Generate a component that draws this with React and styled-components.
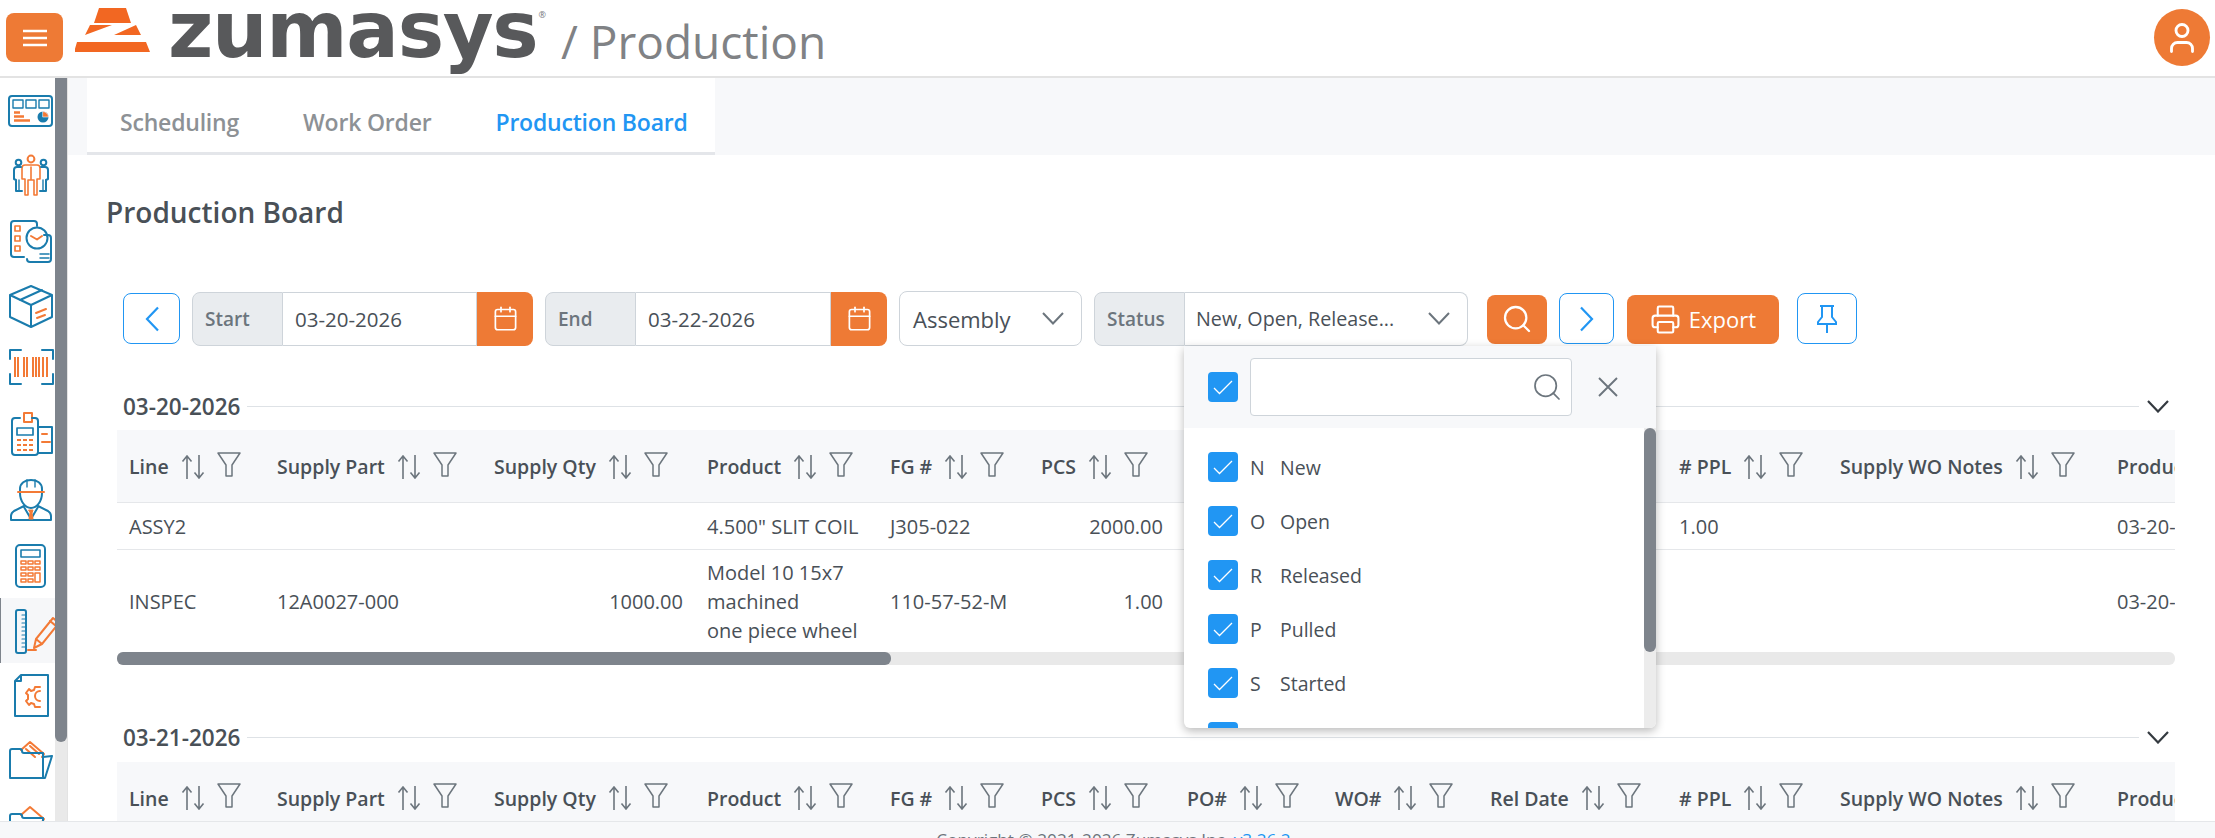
import styled, { createGlobalStyle } from "styled-components";
import { Calendar, Printer, Search, User } from "lucide-react";

const BLUE = "#1a7cad";
const ORANGE = "#f37a36";
const FONT = `"Open Sans", "Noto Sans", sans-serif`;

const GlobalStyle = createGlobalStyle`
  html, body {
    margin: 0;
    height: 100%;
    overflow: hidden;
    background: #fff;
  }
  body {
    font-family: ${FONT};
    color: #495057;
  }
  * {
    box-sizing: border-box;
  }
`;

const Page = styled.div`
  width: 2215px;
  height: 838px;
  display: flex;
  flex-direction: column;
  overflow: hidden;
`;

const Header = styled.header`
  flex: 0 0 78px;
  display: flex;
  align-items: flex-start;
  padding: 13px 5px 0 6px;
  border-bottom: 2px solid #e3e3e3;
  background: #fff;
  overflow: hidden;
`;

const MenuButton = styled.button`
  width: 57px;
  height: 49px;
  border: 0;
  border-radius: 8px;
  padding: 0;
  background: #ee7a35;
  display: flex;
  align-items: center;
  justify-content: center;
`;

const LogoLink = styled.div`
  display: flex;
  align-items: flex-start;
  margin: -13px 0 0 12px;
  height: 76px;
`;

const LogoMark = styled.svg`
  width: 82px;
  height: 60px;
  flex: none;
`;

const Wordmark = styled.span`
  font-family: "DejaVu Sans", sans-serif;
  font-weight: 700;
  font-size: 78px;
  line-height: 60px;
  letter-spacing: -1.3px;
  color: #58595b;
  margin-left: 11px;
`;

const Registered = styled.span`
  font-size: 9px;
  line-height: 12px;
  margin: 9px 0 0 1px;
  color: #77787b;
`;

const AppName = styled.span`
  font-size: 46px;
  line-height: 60px;
  margin: 11px 0 0 15px;
  color: #808285;
`;

const Avatar = styled.div`
  margin: -4px 0 0 auto;
  width: 56px;
  height: 57px;
  border-radius: 50%;
  background: #ee7a35;
  color: #fff;
  display: flex;
  align-items: center;
  justify-content: center;
`;

const Body = styled.div`
  flex: 0 0 743px;
  display: flex;
  overflow: hidden;
`;

const Sidebar = styled.nav`
  flex: 0 0 68px;
  height: 100%;
  display: flex;
  border-right: 1px solid #e3e3e3;
`;

const SideList = styled.div`
  flex: 0 0 55px;
  overflow: hidden;
`;

const SideItem = styled.div`
  height: 65px;
  padding-left: 6px;
  display: flex;
  align-items: center;
  overflow: hidden;
  background: ${(p) => (p.$active ? "#f6f7f9" : "transparent")};
  border-left: 1px solid ${(p) => (p.$active ? "#7e848c" : "transparent")};
`;

const SideIcon = styled.svg`
  width: 48px;
  height: 48px;
  flex: none;
  overflow: visible;
  fill: none;
  stroke-width: 2;
  stroke-linejoin: round;
  stroke-linecap: round;
`;

const VTrack = styled.div`
  flex: 0 0 12px;
  height: 100%;
  background: ${(p) => p.$bg};
  border-radius: ${(p) => p.$radius};
`;

const VThumb = styled.div`
  height: ${(p) => p.$h}px;
  background: #7e848c;
  border-radius: ${(p) => p.$radius};
`;

const HTrack = styled.div`
  height: 13px;
  background: #e9e9e9;
  border-radius: 6px;
`;

const HThumb = styled.div`
  width: ${(p) => p.$w}px;
  height: 13px;
  background: #7e848c;
  border-radius: 6px;
`;

const Main = styled.main`
  flex: 1;
  min-width: 0;
  overflow: hidden;
`;

const TabStrip = styled.div`
  height: 77px;
  padding-left: 19px;
  background: #f7f8fa;
`;

const Tabs = styled.div`
  width: 628px;
  height: 77px;
  padding: 0 0 0 33px;
  display: flex;
  align-items: center;
  gap: 64px;
  background: #fff;
  border-bottom: 3px solid #e4e6ea;
`;

const Tab = styled.span`
  font-size: 23px;
  font-weight: 600;
  margin-top: 14px;
  letter-spacing: -0.2px;
  color: ${(p) => (p.$active ? "#2196f3" : "#8d9195")};
`;

const Content = styled.div`
  padding: 39px 0 0 38px;
`;

const Title = styled.h2`
  margin: 0 0 61px;
  font-size: 28px;
  line-height: 36px;
  font-weight: 600;
  color: #495057;
`;

const Toolbar = styled.div`
  display: flex;
  align-items: center;
  gap: 12px;
  height: 55px;
  margin-left: 17px;
`;

const OutlineButton = styled.button`
  width: ${(p) => p.$w}px;
  height: 51px;
  margin-left: ${(p) => p.$ml || 0}px;
  padding: 0;
  border: 1px solid #2196f3;
  border-radius: 8px;
  background: #fff;
  display: flex;
  align-items: center;
  justify-content: center;
`;

const Group = styled.div`
  position: relative;
  width: ${(p) => p.$w}px;
  height: 54px;
  display: flex;
  border-radius: 8px;
  background: #fff;
`;

const GroupLabel = styled.span`
  width: ${(p) => p.$w}px;
  flex: none;
  padding-left: 12px;
  display: flex;
  align-items: center;
  font-size: 19px;
  font-weight: 600;
  color: #6c757d;
  background: #e9ecef;
  border: 1px solid #ced4da;
  border-radius: 8px 0 0 8px;
`;

const DateInput = styled.span`
  flex: 1;
  min-width: 0;
  padding-left: 12px;
  display: flex;
  align-items: center;
  font-size: 20.5px;
  color: #495057;
  border: 1px solid #ced4da;
  border-left: 0;
`;

const CalendarButton = styled.span`
  width: 56px;
  flex: none;
  display: flex;
  align-items: center;
  justify-content: center;
  background: #ee7a35;
  color: #fff;
  border-radius: 0 8px 8px 0;
`;

const SelectBox = styled.div`
  width: 183px;
  height: 55px;
  padding: 0 17px 0 13px;
  display: flex;
  align-items: center;
  justify-content: space-between;
  font-size: 22px;
  color: #495057;
  border: 1px solid #ced4da;
  border-radius: 8px;
`;

const StatusValue = styled.span`
  flex: 1;
  min-width: 0;
  padding: 0 17px 0 11px;
  display: flex;
  align-items: center;
  justify-content: space-between;
  font-size: 19.7px;
  white-space: nowrap;
  border: 1px solid #ced4da;
  border-left: 0;
  border-radius: 0 8px 8px 0;
`;

const OrangeButton = styled.button`
  width: ${(p) => p.$w}px;
  height: 49px;
  margin: 1px 0 0 ${(p) => p.$ml || 0}px;
  padding: 0;
  border: 0;
  border-radius: 8px;
  background: #ee7a35;
  color: #fff;
  font-family: ${FONT};
  font-size: 22px;
  display: flex;
  align-items: center;
  justify-content: center;
  gap: 8px;
`;

const Dropdown = styled.div`
  position: absolute;
  top: 54px;
  left: 90px;
  width: 472px;
  height: 382px;
  z-index: 5;
  background: #fff;
  border-radius: 0 0 6px 6px;
  box-shadow: 0 3px 10px rgba(0, 0, 0, 0.28);
  display: flex;
  flex-direction: column;
`;

const DropHead = styled.div`
  flex: 0 0 82px;
  padding: 12px 0 0 24px;
  display: flex;
  align-items: flex-start;
  background: #f7f8fa;
`;

const Check = styled.span`
  width: 30px;
  height: 30px;
  flex: none;
  border-radius: 4px;
  background: #2196f3;
  display: flex;
  align-items: center;
  justify-content: center;
  margin-top: ${(p) => p.$top || 0}px;
`;

const SearchField = styled.div`
  width: 322px;
  height: 58px;
  margin-left: 12px;
  padding-right: 8px;
  background: #fff;
  border: 1px solid #ced4da;
  border-radius: 4px;
  display: flex;
  align-items: center;
  justify-content: flex-end;
  color: #6c757d;
`;

const CloseIcon = styled.svg`
  width: 20px;
  height: 20px;
  margin: 19px 0 0 26px;
  stroke: #6c757d;
  stroke-width: 1.9;
  fill: none;
`;

const DropBody = styled.div`
  flex: 1;
  min-height: 0;
  display: flex;
`;

const DropList = styled.div`
  flex: 1;
  min-width: 0;
  padding-top: 24px;
  overflow: hidden;
`;

const DropItem = styled.div`
  height: 54px;
  padding-left: 24px;
  display: flex;
  font-size: 19.5px;
  line-height: 32px;
  color: #495057;
`;

const ItemCode = styled.span`
  width: 30px;
  margin-left: 12px;
`;

const Section = styled.section`
  width: 2058px;
  margin: ${(p) => p.$top}px 0 0 11px;
`;

const SectionHead = styled.div`
  height: 30px;
  padding: 0 6px;
  display: flex;
  align-items: center;
  font-size: 22.5px;
  font-weight: 600;
  color: #495057;
`;

const SectionLine = styled.span`
  flex: 1;
  height: 1px;
  margin: 0 8px 0 7px;
  background: #dee2e6;
`;

const TableScroll = styled.div`
  margin-top: 9px;
  overflow: hidden;
`;

const Table = styled.table`
  width: 5472px;
  table-layout: fixed;
  border-collapse: collapse;
`;

const Th = styled.th`
  height: 72px;
  padding: 2px 12px 0;
  background: #f7f8fa;
  border-bottom: 1px solid #e5e7ea;
  text-align: left;
  font-size: 19.5px;
  font-weight: 600;
  color: #495057;
  white-space: nowrap;
`;

const ThInner = styled.div`
  display: flex;
  align-items: center;
  gap: 12px;
`;

const Td = styled.td`
  height: 47px;
  padding: 8px 12px 7px;
  border-bottom: 1px solid #e5e7ea;
  font-size: 20px;
  line-height: 29px;
  color: #495057;
  text-align: ${(p) => (p.$right ? "right" : "left")};
  overflow: hidden;
  white-space: pre-line;
`;

const LastRow = styled.tr`
  &:last-child td {
    border-bottom: 0;
  }
`;

const Footer = styled.footer`
  flex: 0 0 17px;
  padding: 7px 0 0 12px;
  overflow: hidden;
  text-align: center;
  font-size: 17.2px;
  line-height: 22px;
  color: #6c757d;
  background: #f7f8fa;
  border-top: 1px solid #e5e7ea;
`;

const Version = styled.span`
  color: #2196f3;
`;

const SortIcon = () => (
  <svg width="24" height="24" viewBox="0 0 24 24" fill="none" stroke="#6c757d" strokeWidth="1.6" style={{ flex: "none" }}>
    <path d="M6 24V1M1.5 6.5 6 1l4.5 5.5M18 0v23M13.5 17.5 18 23l4.5-5.5" />
  </svg>
);

const FilterIcon = () => (
  <svg width="24" height="25" viewBox="0 0 24 25" fill="none" stroke="#6c757d" strokeWidth="1.5" style={{ flex: "none", marginTop: -5 }}>
    <path d="M1 1h22l-8 12v11H9V13z" strokeLinejoin="round" />
  </svg>
);

const CheckMark = () => (
  <svg width="20" height="20" viewBox="0 0 20 20" fill="none" stroke="#fff" strokeWidth="1.3">
    <path d="M1 11l5.5 5.5L19 4" />
  </svg>
);

const PinIcon = () => (
  <svg width="26" height="28" viewBox="0 0 26 28" fill="none" stroke="#2196f3" strokeWidth="2">
    <path d="M6 1h14M8 1v11l-4 5v2h18v-2l-4-5V1M13 19v9" />
  </svg>
);

const MenuLines = () => (
  <svg width="24" height="18" viewBox="0 0 24 18" fill="none" stroke="#fff" strokeWidth="2.4">
    <path d="M0 2h24M0 9h24M0 16h24" />
  </svg>
);

const ChevronV = ({ color, width = 22, height = 13, stroke = 2 }) => (
  <svg width={width} height={height} viewBox="0 0 22 13" fill="none" stroke={color} strokeWidth={stroke} style={{ flex: "none" }}>
    <path d="M1 1l10 10.5L21 1" />
  </svg>
);

const ChevronH = ({ left }) => (
  <svg width="16" height="26" viewBox="0 0 16 26" fill="none" stroke="#2196f3" strokeWidth="2.2">
    <path d={left ? "M14 1.5 3 13l11 11.5" : "M2 1.5 13 13 2 24.5"} />
  </svg>
);

const icons = [
  <>
    <rect x="2" y="9" width="43" height="30" rx="3" stroke={BLUE} />
    <path d="M6 13h10v8H6zM19 13h10v8H19zM32 13h10v8H32z" stroke={BLUE} strokeWidth="1.4" />
    <path d="M7 25.5h6M7 29.5h10M7 33.5h16" stroke={ORANGE} strokeWidth="2.6" strokeLinecap="butt" />
    <circle cx="36" cy="30" r="5.5" fill={BLUE} stroke="none" />
    <path d="M36 24.5a5.5 5.5 0 0 1 5.5 5.5H36z" fill={ORANGE} stroke="#fff" strokeWidth="0.6" />
  </>,
  <>
    <circle cx="24" cy="7" r="3.4" stroke={ORANGE} />
    <path d="M18 13h12q3 0 3 3v11h-3v16h-3V28h-6v15h-3V27h-3V16q0-3 3-3zM24 15v13" stroke={ORANGE} strokeWidth="1.6" />
    <circle cx="11.5" cy="10.5" r="2.8" stroke={BLUE} />
    <circle cx="36.5" cy="10.5" r="2.8" stroke={BLUE} />
    <path d="M14 15H10q-3 0-3 3v9l2 1v11h6M34 15h4q3 0 3 3v9l-2 1v11h-6" stroke={BLUE} />
    <path d="M12 28v10M36 28v10" stroke={BLUE} strokeWidth="1.4" />
  </>,
  <>
    <path d="M17 40H7q-3 0-3-3V7q0-3 3-3h20q3 0 3 3v2" stroke={BLUE} />
    <path d="M37 18h4q3 0 3 3v21q0 3-3 3H23q-3 0-3-3" stroke={BLUE} />
    <path d="M8 9h5v5H8zM8 19h5v5H8zM8 29h5v5H8z" stroke={ORANGE} strokeWidth="1.7" />
    <circle cx="30" cy="21" r="10.5" stroke={BLUE} />
    <path d="M24 19l6 3.5 5-3.5" stroke={ORANGE} />
    <path d="M33 37h9M33 41h9" stroke={BLUE} strokeWidth="1.5" />
  </>,
  <>
    <path d="M24 4l21 9v22l-21 10L3 35V13zM3 13l21 10 21-10M24 23v22M13 18l22-10" stroke={BLUE} />
    <path d="M29 31l10-4M30 36l8-3" stroke={ORANGE} />
  </>,
  <>
    <path d="M3 12V3h11M35 3h11v9M3 27v10h11M35 37h11V27" stroke={BLUE} />
    <path
      d="M8 10v20M11 10v20M17 10v20M20 10v20M26 10v20M29 10v20M32 10v20M36 10v20M40 10v20"
      stroke={ORANGE}
      strokeLinecap="butt"
    />
  </>,
  <>
    <path d="M17 1h8v9h-8z" stroke={ORANGE} />
    <path d="M13 6H8q-3 0-3 3v31q0 3 3 3h20q3 0 3-3V9q0-3-3-3h-3" stroke={BLUE} />
    <path d="M10 16h16v7H10z" stroke={BLUE} strokeWidth="1.7" />
    <path d="M10 28h4M16 28h4M22 28h4M10 33h4M16 33h4M22 33h4M10 38h4M16 38h4M22 38h4" stroke={ORANGE} strokeLinecap="butt" />
    <path d="M31 15h14v26H31" stroke={BLUE} />
    <path d="M35 22h5M35 30h8" stroke={ORANGE} />
  </>,
  <>
    <path d="M13 16V12C13 6 18 3 24 3s11 3 11 9v4M13 16c0 8 5 15 11 15s11-7 11-15" stroke={BLUE} />
    <path d="M11 15h26" stroke={ORANGE} />
    <path d="M20 3v7M28 3v7" stroke={BLUE} strokeWidth="1.4" />
    <path d="M17 29l-10 5q-3 2-3 5v4h40v-4q0-3-3-5l-10-5M17 30l7 12 7-12" stroke={BLUE} />
    <path d="M22 33h4l-1 3 1 6h-4l1-6z" fill={ORANGE} stroke={ORANGE} strokeWidth="1" />
  </>,
  <>
    <rect x="9" y="3" width="29" height="42" rx="4" stroke={BLUE} />
    <path d="M14 8h19v7H14z" stroke={BLUE} strokeWidth="1.6" />
    <path
      d="M14 19h5v3h-5zM21 19h5v3h-5zM28 19h5v3h-5zM14 25h5v3h-5zM21 25h5v3h-5zM28 25h5v3h-5zM14 31h5v3h-5zM21 31h5v3h-5zM28 31h5v9h-5zM14 37h5v3h-5zM21 37h5v3h-5z"
      stroke={ORANGE}
      strokeWidth="1.5"
    />
  </>,
  <>
    <rect x="9" y="3" width="10" height="43" rx="2" stroke={BLUE} />
    <path d="M15 8h4M15 12h4M15 16h4M15 20h4M15 24h4M15 28h4M15 32h4M15 36h4M15 40h4" stroke={BLUE} strokeWidth="1.2" />
    <path d="M27 41l2-9 17-21 6 5-17 21zM29 32l6 5M43 14l6 5M21 43h8" stroke={ORANGE} />
  </>,
  <>
    <path d="M14 3h27v41H8V9zM14 3v6H8" stroke={BLUE} />
    <path
      d="M33 15h-5l-1 3-3 1-2-2-3 4 2 2v4l-2 2 3 4 2-2 3 1 1 3h5M33 19a5 5 0 0 0 0 10"
      stroke={ORANGE}
    />
  </>,
  <>
    <path d="M14 13l9-8 14 12-2 3M19 12l9 8M23 9l9 8" stroke={ORANGE} />
    <path d="M3 40V14q0-2 2-2h8q2 0 2 2t2 2h19v8" stroke={BLUE} />
    <path d="M3 41h35l7-22-9 1v20" stroke={BLUE} />
  </>,
  <>
    <path d="M14 13l9-8 14 12-2 3" stroke={ORANGE} />
    <path d="M3 40V14q0-2 2-2h8q2 0 2 2t2 2h19v8" stroke={BLUE} />
  </>,
];

const columns = [
  { label: "Line", width: 148 },
  { label: "Supply Part", width: 217 },
  { label: "Supply Qty", width: 213 },
  { label: "Product", width: 183 },
  { label: "FG #", width: 151 },
  { label: "PCS", width: 146 },
  { label: "PO#", width: 148 },
  { label: "WO#", width: 155 },
  { label: "Rel Date", width: 189 },
  { label: "# PPL", width: 161 },
  { label: "Supply WO Notes", width: 277 },
  { label: "Production Date" },
];

const rows = [
  ["ASSY2", "", "", '4.500" SLIT COIL', "J305-022", "2000.00", "", "", "", "1.00", "", "03-20-2026"],
  ["INSPEC", "12A0027-000", "1000.00", "Model 10 15x7\nmachined\none piece wheel", "110-57-52-M", "1.00", "", "", "", "", "", "03-20-2026"],
];

const statuses = [
  ["N", "New"],
  ["O", "Open"],
  ["R", "Released"],
  ["P", "Pulled"],
  ["S", "Started"],
  ["C", "Completed"],
  ["X", "Cancelled"],
];

const rightAligned = [2, 5];

const BoardSection = ({ date, top, data }) => (
  <Section $top={top}>
    <SectionHead>
      {date}
      <SectionLine />
      <ChevronV color="#343a40" stroke={2.2} />
    </SectionHead>
    <TableScroll>
      <Table>
        <colgroup>
          {columns.map((c) => (
            <col key={c.label} style={{ width: c.width }} />
          ))}
        </colgroup>
        <thead>
          <tr>
            {columns.map((c) => (
              <Th key={c.label}>
                <ThInner>
                  {c.label}
                  <SortIcon />
                  <FilterIcon />
                </ThInner>
              </Th>
            ))}
          </tr>
        </thead>
        <tbody>
          {data.map((row) => (
            <LastRow key={row[0]}>
              {row.map((cell, i) => (
                <Td key={i} $right={rightAligned.includes(i)}>
                  {cell}
                </Td>
              ))}
            </LastRow>
          ))}
        </tbody>
      </Table>
    </TableScroll>
    <HTrack>
      <HThumb $w={774} />
    </HTrack>
  </Section>
);

const App = () => {
  return (
    <Page>
      <GlobalStyle />
      <Header>
        <MenuButton>
          <MenuLines />
        </MenuButton>
        <LogoLink>
          <LogoMark viewBox="0 0 82 60">
            <path fill="#f26722" d="M24 8h27l5 15H19zM10 35l5-10h22zM39 35l22-10 5 10zM2 42h69l4 10H-1z" />
          </LogoMark>
          <Wordmark>zumasys</Wordmark>
          <Registered>®</Registered>
          <AppName>/ Production</AppName>
        </LogoLink>
        <Avatar>
          <User size={36} strokeWidth={1.9} />
        </Avatar>
      </Header>
      <Body>
        <Sidebar>
          <SideList>
            {icons.map((icon, i) => (
              <SideItem key={i} $active={i === 8}>
                <SideIcon viewBox="0 0 48 48">{icon}</SideIcon>
              </SideItem>
            ))}
          </SideList>
          <VTrack $bg="#e9e9e9">
            <VThumb $h={664} $radius="0 0 12px 12px" />
          </VTrack>
        </Sidebar>
        <Main>
          <TabStrip>
            <Tabs>
              <Tab>Scheduling</Tab>
              <Tab>Work Order</Tab>
              <Tab $active>Production Board</Tab>
            </Tabs>
          </TabStrip>
          <Content>
            <Title>Production Board</Title>
            <Toolbar>
              <OutlineButton $w={57}>
                <ChevronH left />
              </OutlineButton>
              <Group $w={341}>
                <GroupLabel $w={91}>Start</GroupLabel>
                <DateInput>03-20-2026</DateInput>
                <CalendarButton>
                  <Calendar size={27} strokeWidth={1.5} />
                </CalendarButton>
              </Group>
              <Group $w={342}>
                <GroupLabel $w={91}>End</GroupLabel>
                <DateInput>03-22-2026</DateInput>
                <CalendarButton>
                  <Calendar size={27} strokeWidth={1.5} />
                </CalendarButton>
              </Group>
              <SelectBox>
                Assembly
                <ChevronV color="#6c757d" />
              </SelectBox>
              <Group $w={374}>
                <GroupLabel $w={91}>Status</GroupLabel>
                <StatusValue>
                  New, Open, Release...
                  <ChevronV color="#6c757d" />
                </StatusValue>
                <Dropdown>
                  <DropHead>
                    <Check $top={14}>
                      <CheckMark />
                    </Check>
                    <SearchField>
                      <Search size={32} strokeWidth={1.3} />
                    </SearchField>
                    <CloseIcon viewBox="0 0 20 20">
                      <path d="M1 1l18 18M19 1 1 19" />
                    </CloseIcon>
                  </DropHead>
                  <DropBody>
                    <DropList>
                      {statuses.map(([code, name]) => (
                        <DropItem key={code}>
                          <Check>
                            <CheckMark />
                          </Check>
                          <ItemCode>{code}</ItemCode>
                          {name}
                        </DropItem>
                      ))}
                    </DropList>
                    <VTrack $bg="#ececec" $radius="0 0 6px 0">
                      <VThumb $h={224} $radius="6px" />
                    </VTrack>
                  </DropBody>
                </Dropdown>
              </Group>
              <OrangeButton $w={60} $ml={7}>
                <Search size={32} strokeWidth={1.7} />
              </OrangeButton>
              <OutlineButton $w={55}>
                <ChevronH />
              </OutlineButton>
              <OrangeButton $w={152} $ml={1}>
                <Printer size={31} strokeWidth={1.6} />
                Export
              </OrangeButton>
              <OutlineButton $w={60} $ml={6}>
                <PinIcon />
              </OutlineButton>
            </Toolbar>
            <BoardSection date="03-20-2026" top={45} data={rows} />
            <BoardSection date="03-21-2026" top={58} data={rows} />
          </Content>
        </Main>
      </Body>
      <Footer>
        Copyright © 2021-2026 Zumasys Inc. <Version>v3.26.2</Version>
      </Footer>
    </Page>
  );
};

export default App;
